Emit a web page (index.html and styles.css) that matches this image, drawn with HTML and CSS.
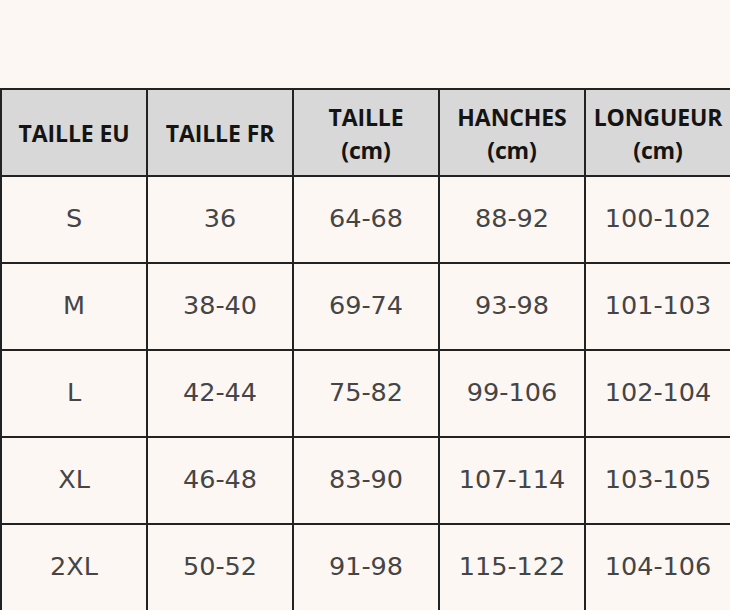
FILE: index.html
```html
<!DOCTYPE html>
<html lang="fr">
<head>
<meta charset="utf-8">
<title>Guide des tailles</title>
<link rel="stylesheet" href="styles.css">
</head>
<body>
<div class="size-table">
  <div class="cell head">TAILLE EU</div>
  <div class="cell head">TAILLE FR</div>
  <div class="cell head">TAILLE<br>(cm)</div>
  <div class="cell head">HANCHES<br>(cm)</div>
  <div class="cell head">LONGUEUR<br>(cm)</div>

  <div class="cell">S</div>
  <div class="cell">36</div>
  <div class="cell">64-68</div>
  <div class="cell">88-92</div>
  <div class="cell">100-102</div>

  <div class="cell">M</div>
  <div class="cell">38-40</div>
  <div class="cell">69-74</div>
  <div class="cell">93-98</div>
  <div class="cell">101-103</div>

  <div class="cell">L</div>
  <div class="cell">42-44</div>
  <div class="cell">75-82</div>
  <div class="cell">99-106</div>
  <div class="cell">102-104</div>

  <div class="cell">XL</div>
  <div class="cell">46-48</div>
  <div class="cell">83-90</div>
  <div class="cell">107-114</div>
  <div class="cell">103-105</div>

  <div class="cell">2XL</div>
  <div class="cell">50-52</div>
  <div class="cell">91-98</div>
  <div class="cell">115-122</div>
  <div class="cell">104-106</div>
</div>
</body>
</html>
```
FILE: styles.css
```css
html, body {
  margin: 0;
  padding: 0;
  background: #fdf7f4;
  overflow: hidden;
}

.size-table {
  margin-top: 88px;
  display: grid;
  grid-template-columns: repeat(5, 146px);
  grid-auto-rows: 87px;
  border-top: 2px solid #222;
  border-left: 2px solid #222;
  width: max-content;
}

.cell {
  box-sizing: border-box;
  padding-bottom: 4px;
  border-right: 2px solid #222;
  border-bottom: 2px solid #222;
  display: flex;
  align-items: center;
  justify-content: center;
  text-align: center;
  font-family: "DejaVu Sans", sans-serif;
  font-size: 25.5px;
  color: #454545;
}

.head {
  background: #d8d8d8;
  padding: 2px 0 0;
  font-family: "Open Sans", sans-serif;
  font-weight: 700;
  font-size: 23px;
  line-height: 33px;
  letter-spacing: -0.1px;
  color: #141414;
}
```
